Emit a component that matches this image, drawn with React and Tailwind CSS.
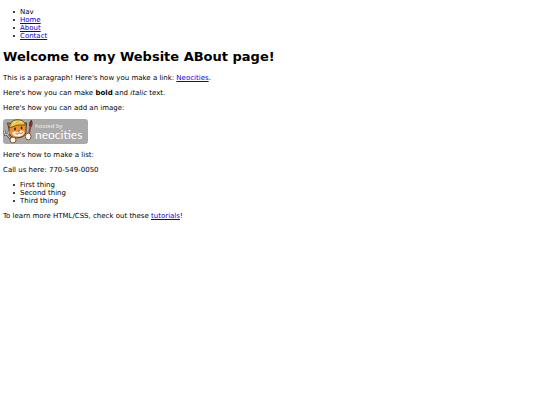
const navLinks = ["Home", "About", "Contact"];

const things = ["First thing", "Second thing", "Third thing"];

function Link({ children }) {
  return (
    <a href="#" className="text-[#0000ee] underline">
      {children}
    </a>
  );
}

function BulletItem({ children }) {
  return (
    <li className="flex items-center gap-[5px] before:size-[2px] before:rounded-full before:bg-black before:content-['']">
      {children}
    </li>
  );
}

// "hosted by neocities" badge
function HostedBadge() {
  return (
    <svg
      className="block h-[25px] w-[85px]"
      viewBox="0 0 85 25"
      role="img"
      aria-label="Hosted by Neocities"
    >
      <rect width="85" height="25" rx="3" fill="#a9a9a9" />
      {/* brush */}
      <path d="M26 15 L27.5 7" stroke="#8b4a2b" strokeWidth="1.8" />
      <path d="M26.5 7 Q25.8 3.5 28.5 1 Q30.2 4.5 28.5 7.3 Z" fill="#a42a22" stroke="#3a1c16" strokeWidth="0.6" />
      {/* cat head */}
      <path
        d="M6 10 L4.5 4 L9 4.5 Q14 1 19 4 L23.5 4 L23 10 Q24 17 17 18.5 Q10 20 7 16 Q5 13 6 10 Z"
        fill="#ea923a"
        stroke="#4a2b16"
        strokeWidth="0.9"
      />
      <path d="M6.5 9 Q7 1 14 0.7 Q21 0.5 22.5 6 Q15 4.5 6.5 9 Z" fill="#f0c545" stroke="#594019" strokeWidth="0.8" />
      <path d="M10 4 L13 2.5 M16 3 L19 3" stroke="#fff0a0" strokeWidth="0.7" />
      <path d="M9 14 Q11 11.5 14 13 Q18 10 21.5 13 Q20 17 16 17.5 Q11 18 9 14 Z" fill="#fff2df" />
      <ellipse cx="12" cy="10" rx="0.9" ry="1.4" fill="#302018" />
      <ellipse cx="18.5" cy="9" rx="0.9" ry="1.4" fill="#302018" />
      <path d="M14.5 11.7 L17 11.4 L16 13 Z" fill="#7a3a2c" />
      <path d="M12.5 14.5 Q14.5 16 16 13.7 Q17.5 15.5 20 13.5" fill="none" stroke="#5a3020" strokeWidth="0.7" />
      {/* spanner */}
      <path
        d="M1.2 11.5 L2 15.5 L5.8 15 L6 12 M4 15.5 L8 20"
        fill="none"
        stroke="#48484c"
        strokeWidth="2.2"
      />
      <path d="M1.2 11.5 L2 15.5 L5.8 15 L6 12 M4 15.5 L8 20" fill="none" stroke="#e4e4e4" strokeWidth="1" />
      {/* paws */}
      <ellipse cx="10" cy="21" rx="3" ry="2.9" fill="#fffaf0" stroke="#5a3a22" strokeWidth="0.8" />
      <ellipse cx="25.2" cy="17.5" rx="2.8" ry="3.4" fill="#fffaf0" stroke="#5a3a22" strokeWidth="0.8" />
      <text x="32" y="9" fontSize="6" fill="#f4f4f4" fontFamily="'Liberation Sans Narrow', 'Open Sans', sans-serif">
        hosted by
      </text>
      <text x="32" y="20" fontSize="12" fill="#ffffff" fontFamily="'Liberation Sans Narrow', Lato, sans-serif">
        neocities
      </text>
    </svg>
  );
}

export default function App() {
  return (
    <main className="bg-white px-[3px] py-2 font-['DejaVu_Sans',sans-serif] text-[7px] leading-[8px] text-black">
      <ul className="pl-[10px]">
        <BulletItem>Nav</BulletItem>
        {navLinks.map((name) => (
          <BulletItem key={name}>
            <Link>{name}</Link>
          </BulletItem>
        ))}
      </ul>

      <h1 className="mt-[9px] text-[13px] leading-[16px] font-bold">Welcome to my Website ABout page!</h1>

      <div className="mt-[9px] flex flex-col gap-[7px]">
        <p>
          This is a paragraph! Here's how you make a link: <Link>Neocities</Link>.
        </p>
        <p>
          Here's how you can make <strong>bold</strong> and <em>italic</em> text.
        </p>
        <p>Here's how you can add an image:</p>
        <HostedBadge />
        <p>Here's how to make a list:</p>
        <p>Call us here: 770-549-0050</p>
        <ul className="pl-[10px]">
          {things.map((thing) => (
            <BulletItem key={thing}>{thing}</BulletItem>
          ))}
        </ul>
        <p>
          To learn more HTML/CSS, check out these <Link>tutorials</Link>!
        </p>
      </div>
    </main>
  );
}
